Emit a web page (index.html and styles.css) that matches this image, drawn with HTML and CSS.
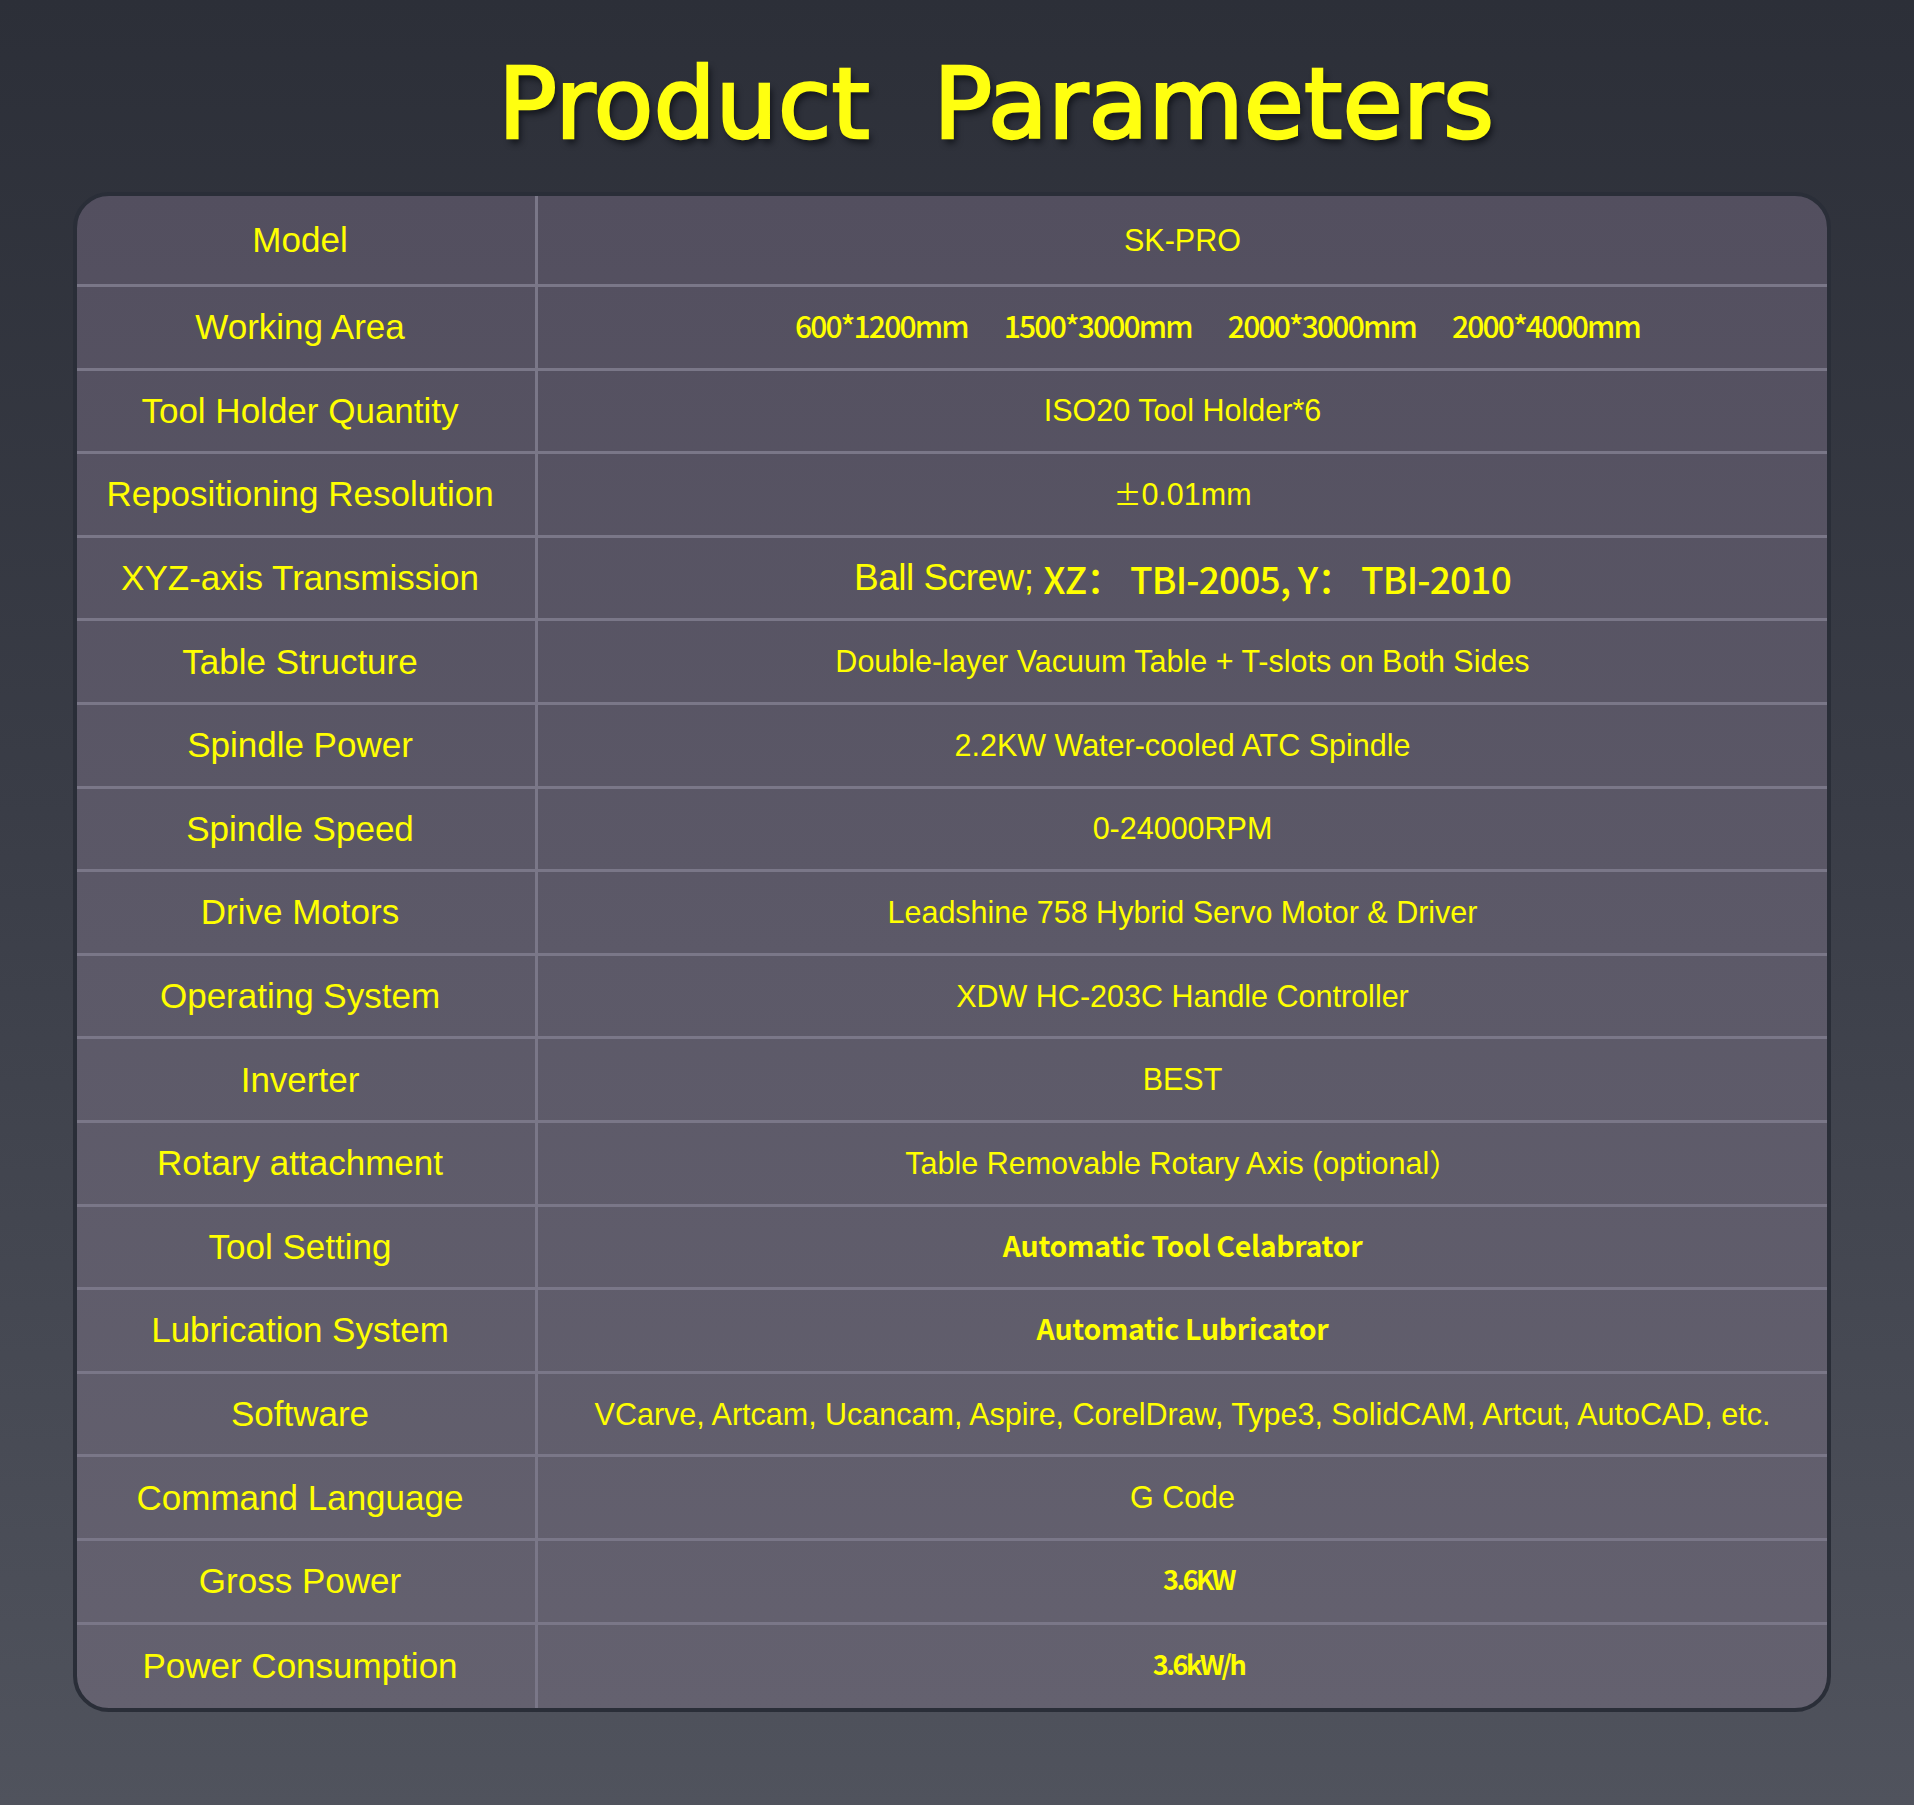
FILE: index.html
```html
<!DOCTYPE html>
<html lang="en">
<head>
<meta charset="utf-8">
<title>Product Parameters</title>
<link rel="stylesheet" href="styles.css">
</head>
<body>
<div class="page">
  <h1 class="title">Product Parameters</h1>
  <div class="table">
    <div class="row"><div class="label">Model</div><div class="value">SK-PRO</div></div>
    <div class="row"><div class="label">Working Area</div><div class="value cjk med sizes"><span>600*1200mm</span><span>1500*3000mm</span><span>2000*3000mm</span><span>2000*4000mm</span></div></div>
    <div class="row"><div class="label">Tool Holder Quantity</div><div class="value">ISO20 Tool Holder*6</div></div>
    <div class="row"><div class="label">Repositioning Resolution</div><div class="value"><span class="cjk pm">±</span>0.01mm</div></div>
    <div class="row"><div class="label">XYZ-axis Transmission</div><div class="value xyz">Ball Screw;&nbsp;<span class="cjk xyz-cjk">XZ：&nbsp;TBI-2005,&nbsp;Y：&nbsp;TBI-2010</span></div></div>
    <div class="row"><div class="label">Table Structure</div><div class="value">Double-layer Vacuum Table + T-slots on Both Sides</div></div>
    <div class="row"><div class="label">Spindle Power</div><div class="value">2.2KW Water-cooled ATC Spindle</div></div>
    <div class="row"><div class="label">Spindle Speed</div><div class="value">0-24000RPM</div></div>
    <div class="row"><div class="label">Drive Motors</div><div class="value">Leadshine 758 Hybrid Servo Motor &amp; Driver</div></div>
    <div class="row"><div class="label">Operating System</div><div class="value">XDW HC-203C Handle Controller</div></div>
    <div class="row"><div class="label">Inverter</div><div class="value">BEST</div></div>
    <div class="row"><div class="label">Rotary attachment</div><div class="value">Table Removable Rotary Axis (optional<span class="cjk">）</span></div></div>
    <div class="row"><div class="label">Tool Setting</div><div class="value cjk bold">Automatic Tool Celabrator</div></div>
    <div class="row"><div class="label">Lubrication System</div><div class="value cjk bold">Automatic Lubricator</div></div>
    <div class="row"><div class="label">Software</div><div class="value">VCarve, Artcam, Ucancam, Aspire, CorelDraw, Type3, SolidCAM, Artcut, AutoCAD, etc.</div></div>
    <div class="row"><div class="label">Command Language</div><div class="value">G Code</div></div>
    <div class="row"><div class="label">Gross Power</div><div class="value cjk bold small">3.6KW</div></div>
    <div class="row"><div class="label">Power Consumption</div><div class="value cjk bold small">3.6kW/h</div></div>
  </div>
</div>
</body>
</html>
```

FILE: styles.css
```css
html, body {
  margin: 0;
  padding: 0;
}
body {
  min-height: 1805px;
  background: linear-gradient(180deg, #2c2f38 0%, #3a3d47 45%, #50535d 100%);
  font-family: "Liberation Sans", Arial, sans-serif;
  color: #ffff00;
}
.page {
  padding: 56px 83px 0 73px;
}
.title {
  margin: 0;
  height: 97px;
  font-family: "DejaVu Sans", sans-serif;
  font-weight: normal;
  font-size: 98px;
  line-height: 97px;
  word-spacing: 32px;
  text-align: center;
  padding-left: 88px;
  color: #ffff10;
  -webkit-text-stroke: 2.5px #ffff10;
  text-shadow: 3px 5px 6px rgba(10, 12, 18, 0.75);
}
.table {
  margin-top: 39px;
  border: 4px solid #2a2e38;
  border-radius: 36px;
  overflow: hidden;
  background: linear-gradient(180deg, #534f5f 0%, #5c5968 50%, #64616f 100%);
}
.row {
  display: flex;
  box-sizing: border-box;
  height: 83.6px;
  border-top: 3px solid #7a7788;
}
.row:first-child {
  height: 88px;
  border-top: 0;
}
.row:last-child {
  height: 86.4px;
}
.label {
  box-sizing: border-box;
  width: 461px;
  flex: none;
  padding-right: 12px;
  border-right: 3px solid #7a7788;
  display: flex;
  align-items: center;
  justify-content: center;
  font-size: 35px;
  white-space: nowrap;
}
.value {
  flex: 1;
  display: flex;
  align-items: center;
  justify-content: center;
  font-size: 30.5px;
  white-space: nowrap;
}
.cjk {
  font-family: "Noto Sans CJK SC", "Noto Sans", sans-serif;
}
.value.cjk {
  padding-bottom: 5px;
  box-sizing: border-box;
}
.med {
  font-weight: 500;
  font-size: 30px;
  letter-spacing: -1.8px;
}
.bold {
  font-weight: 700;
  font-size: 28.5px;
  letter-spacing: -0.3px;
}
.bold.small {
  font-size: 27px;
  letter-spacing: -2.5px;
  padding-left: 32px;
}
.sizes {
  gap: 36px;
  padding-left: 70px;
}
.pm {
  font-size: 28px;
}
.xyz {
  font-size: 37px;
  letter-spacing: -0.5px;
}
.xyz-cjk {
  font-weight: 500;
  font-size: 37px;
  letter-spacing: -0.8px;
}
```
